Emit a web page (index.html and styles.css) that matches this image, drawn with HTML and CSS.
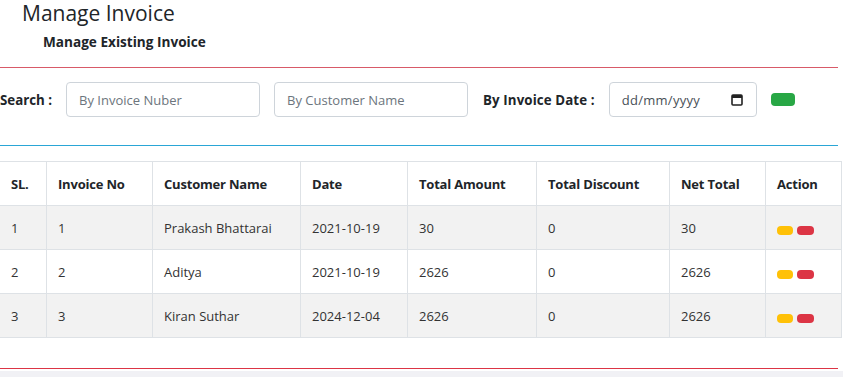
FILE: index.html
```html
<!DOCTYPE html>
<html lang="en">
	<head>
		<meta charset="UTF-8" />
		<meta name="viewport" content="width=device-width, initial-scale=1.0" />
		<title>Manage Invoice</title>
		<link rel="stylesheet" href="styles.css">
	</head>
	<body>
		<div class="page">
			<div class="heading">
				<h2 class="title">Manage Invoice</h2>
				<h5 class="subtitle">Manage Existing Invoice</h5>
			</div>
			<div class="line red"></div>

			<div class="search">
				<label class="label">Search :</label>
				<input class="field" type="text" placeholder="By Invoice Nuber">
				<input class="field" type="text" placeholder="By Customer Name">
				<label class="label date-label">By Invoice Date :</label>
				<div class="field date-field">
					<span>dd/mm/yyyy</span>
					<svg width="12" height="13" viewBox="0 0 12 13"><rect x="1" y="2" width="10" height="10" rx="1" fill="none" stroke="#222" stroke-width="1.6"/><rect x="1" y="2" width="10" height="3" fill="#222"/></svg>
				</div>
				<button class="go"></button>
			</div>
			<div class="line blue"></div>

			<table class="invoices">
				<thead>
					<tr>
						<th class="c1">SL.</th>
						<th class="c2">Invoice No</th>
						<th class="c3">Customer Name</th>
						<th class="c4">Date</th>
						<th class="c5">Total Amount</th>
						<th class="c6">Total Discount</th>
						<th class="c7">Net Total</th>
						<th class="c8">Action</th>
					</tr>
				</thead>
				<tbody>
					<tr>
						<td>1</td><td>1</td><td>Prakash Bhattarai</td><td>2021-10-19</td><td>30</td><td>0</td><td>30</td>
						<td><span class="btn edit"></span><span class="btn del"></span></td>
					</tr>
					<tr>
						<td>2</td><td>2</td><td>Aditya</td><td>2021-10-19</td><td>2626</td><td>0</td><td>2626</td>
						<td><span class="btn edit"></span><span class="btn del"></span></td>
					</tr>
					<tr>
						<td>3</td><td>3</td><td>Kiran Suthar</td><td>2024-12-04</td><td>2626</td><td>0</td><td>2626</td>
						<td><span class="btn edit"></span><span class="btn del"></span></td>
					</tr>
				</tbody>
			</table>
			<div class="line red bottom"></div>
		</div>
		<div class="footer"></div>
	</body>
</html>
```

FILE: styles.css
```css
body {
	margin: 0;
	font-family: "Open Sans", Arial, sans-serif;
	color: #212529;
	background-color: #fff;
	overflow: hidden;
}

.page {
	width: 838px;
}

.heading {
	padding-left: 22px;
	padding-top: 1px;
}

.title {
	margin: 0;
	font-size: 21px;
	font-weight: 400;
	line-height: 24px;
}

.subtitle {
	margin: 9px 0 0 21px;
	font-size: 13.6px;
	font-weight: 700;
	line-height: 16px;
}

.line {
	height: 0;
}

.line.red {
	border-top: 1px solid #d85a68;
	margin-top: 17px;
}

.line.blue {
	border-top: 1px solid #2aa6d6;
	margin-top: 28px;
}

.line.bottom {
	border-top-color: #dc3545;
	margin-top: 30px;
}

.search {
	display: flex;
	align-items: center;
	margin-top: 14px;
	height: 35px;
}

.label {
	font-size: 13.3px;
	font-weight: 700;
	white-space: nowrap;
}

.field {
	box-sizing: border-box;
	width: 194px;
	height: 35px;
	margin-left: 14px;
	padding: 0 12px;
	border: 1px solid #ced4da;
	border-radius: 4px;
	font-family: inherit;
	font-size: 13px;
	color: #495057;
}

.field::placeholder {
	color: #6c757d;
}

.date-label {
	margin-left: 15px;
	letter-spacing: 0.1px;
}

.date-field {
	width: 148px;
	display: flex;
	align-items: center;
	justify-content: space-between;
	padding-right: 13px;
	color: #495057;
	letter-spacing: 0.3px;
}

.go {
	width: 24px;
	height: 13px;
	margin-left: 14px;
	border: 0;
	border-radius: 4px;
	background-color: #28a745;
	padding: 0;
}

.invoices {
	margin-top: 15px;
	width: 838px;
	border-collapse: collapse;
	table-layout: fixed;
	font-size: 13px;
}

.invoices th,
.invoices td {
	border: 1px solid #dee2e6;
	height: 43px;
	padding: 0 0 0 11px;
	text-align: left;
	white-space: nowrap;
}

.invoices th {
	font-weight: 700;
	letter-spacing: -0.2px;
}

.invoices td {
	color: #333;
}

.invoices th:first-child,
.invoices td:first-child {
	border-left: 0;
}

.invoices tbody tr:nth-child(odd) {
	background-color: #f2f2f2;
}

.c1 { width: 35px; }
.c2 { width: 94px; }
.c3 { width: 136px; }
.c4 { width: 95px; }
.c5 { width: 117px; }
.c6 { width: 121px; }
.c7 { width: 84px; }
.c8 { width: 64px; }

.btn {
	display: inline-block;
	width: 16px;
	height: 9px;
	border-radius: 4px;
	margin-top: 2px;
	vertical-align: middle;
}

.btn.edit {
	background-color: #ffc107;
}

.btn.del {
	background-color: #dc3545;
	margin-left: 4px;
	width: 17px;
}

.footer {
	height: 20px;
	background-color: #f1f1f5;
	margin-top: 2px;
}
```
